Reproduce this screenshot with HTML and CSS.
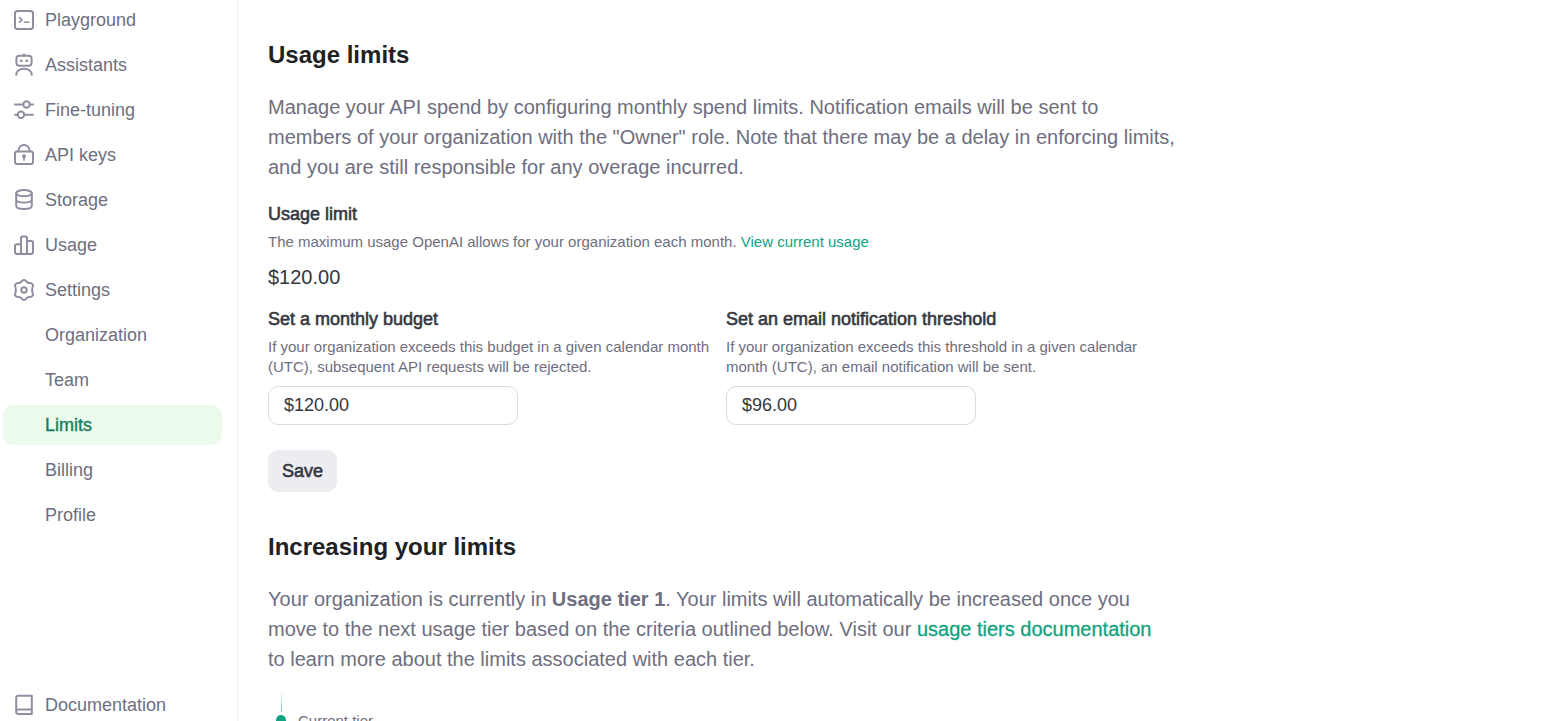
FILE: index.html
```
<!DOCTYPE html>
<html lang="en">
<head>
<meta charset="utf-8">
<title>Usage limits</title>
<link rel="stylesheet" href="styles.css">
</head>
<body>
<div class="shell">
  <nav class="sidebar" aria-label="Main">
    <a class="nav-item" href="#playground">
      <svg class="icon" viewBox="0 0 22 22"><rect x="2" y="2" width="18" height="18" rx="2.5"/><path class="thin" d="M6.500 8.500 9 10.800 6.500 13.200M11.500 13.200h4.200"/></svg>
      Playground</a>
    <a class="nav-item" href="#assistants">
      <svg class="icon" viewBox="0 0 22 22"><rect x="3.400" y="1.800" width="15.200" height="10" rx="3"/><path d="M11 .2v1.600M3.200 20.800c.3-3.800 3.600-6 7.800-6s7.500 2.200 7.800 6"/><path class="dot" d="M8.300 6.800v.1M13.700 6.800v.1"/></svg>
      Assistants</a>
    <a class="nav-item" href="#fine-tuning">
      <svg class="icon" viewBox="0 0 22 22"><path d="M2 5.500h8M17 5.500h3M2 15.800h2.500M11.500 15.800h8.500"/><circle cx="13.500" cy="5.500" r="3.200"/><circle cx="8" cy="15.800" r="3.200"/></svg>
      Fine-tuning</a>
    <a class="nav-item" href="#api-keys">
      <svg class="icon" viewBox="0 0 22 22"><rect x="2" y="7.500" width="18" height="12.500" rx="2"/><path d="M5.500 7.300V6.500a5.500 5.500 0 0 1 11 0v.8"/><path class="thin" d="M11 12.800v3.400"/><circle class="solid" cx="11" cy="12.300" r="2"/></svg>
      API keys</a>
    <a class="nav-item" href="#storage">
      <svg class="icon" viewBox="0 0 22 22"><ellipse cx="11" cy="4.200" rx="7.800" ry="3.100"/><path d="M3.200 4.200v12.600c0 1.900 3.300 3.200 7.800 3.200s7.800-1.300 7.800-3.200V4.200M3.200 10.400c0 1.900 3.300 3 7.800 3s7.800-1.100 7.800-3"/></svg>
      Storage</a>
    <a class="nav-item" href="#usage">
      <svg class="icon" viewBox="0 0 22 22"><path d="M8 20H4a2 2 0 0 1-2-2v-6a1.700 1.700 0 0 1 1.700-1.700H8M8 20V4.200A1.700 1.700 0 0 1 9.700 2.500h2.600A1.700 1.700 0 0 1 14 4.200V20M14 7h4.200A1.800 1.800 0 0 1 20 8.800V18a2 2 0 0 1-2 2H8"/></svg>
      Usage</a>
    <a class="nav-item" href="#settings">
      <svg class="icon" viewBox="0 0 22 22"><path d="M8.800 2.300Q9.600 1 11 1t2.200 1.300q1.200 1.900 3.400 1.700 2.100-.1 3 1.200t0 2.900q-1.100 2.900 0 5.800.9 1.600 0 2.900t-3 1.200q-2.200-.2-3.400 1.700Q12.400 21 11 21t-2.200-1.300Q7.600 17.800 5.400 18q-2.100.1-3-1.200t0-2.900q1.100-2.900 0-5.800-.9-1.600 0-2.900T5.400 4Q7.600 4.200 8.800 2.300Z"/><circle cx="11" cy="11" r="2.700"/></svg>
      Settings</a>
    <a class="nav-item sub" href="#organization">Organization</a>
    <a class="nav-item sub" href="#team">Team</a>
    <a class="nav-item sub active" href="#limits" aria-current="page">Limits</a>
    <a class="nav-item sub" href="#billing">Billing</a>
    <a class="nav-item sub" href="#profile">Profile</a>
    <a class="nav-item last" href="#documentation">
      <svg class="icon" viewBox="0 0 22 22"><path d="M18.800 15.500H5.500A2.200 2.200 0 0 0 3.200 17.700V3.700A2 2 0 0 1 5.200 1.700h13.600V20H5.500a2.300 2.300 0 0 1-2.300-2.300"/></svg>
      Documentation</a>
  </nav>
  <main class="content">
    <section class="section">
      <h1 class="title">Usage limits</h1>
      <p class="lead">Manage your API spend by configuring monthly spend limits. Notification emails will be sent to members of your organization with the "Owner" role. Note that there may be a delay in enforcing limits, and you are still responsible for any overage incurred.</p>
      <h2 class="label">Usage limit</h2>
      <p class="hint">The maximum usage OpenAI allows for your organization each month. <a class="link" href="#usage">View current usage</a></p>
      <p class="amount">$120.00</p>
      <form class="form">
        <div class="field">
          <label class="label" for="budget">Set a monthly budget</label>
          <p class="hint">If your organization exceeds this budget in a given calendar month (UTC), subsequent API requests will be rejected.</p>
          <input class="input" id="budget" type="text" value="$120.00">
        </div>
        <div class="field">
          <label class="label" for="threshold">Set an email notification threshold</label>
          <p class="hint">If your organization exceeds this threshold in a given calendar month (UTC), an email notification will be sent.</p>
          <input class="input" id="threshold" type="text" value="$96.00">
        </div>
        <button class="save" type="button">Save</button>
      </form>
    </section>
    <section class="section">
      <h1 class="title">Increasing your limits</h1>
      <p class="lead">Your organization is currently in <strong>Usage tier 1</strong>. Your limits will automatically be increased once you move to the next usage tier based on the criteria outlined below. Visit our <a class="link" href="#tiers">usage tiers documentation</a> to&nbsp;learn&nbsp;more about the limits associated with each tier.</p>
      <div class="tier">
        <div class="track"><span class="track-line"></span><span class="track-dot"></span></div>
        <span class="tier-name">Current tier</span>
      </div>
    </section>
  </main>
</div>
</body>
</html>
```
FILE: styles.css
```
* { box-sizing: border-box; }
body {
  margin: 0;
  background: #fff;
  color: #353740;
  font-family: "Liberation Sans", Arial, sans-serif;
}
h1, h2, p { margin: 0; }
a { text-decoration: none; }
.shell { display: flex; height: 100vh; overflow: hidden; }
.sidebar {
  flex: 0 0 238px;
  display: flex;
  flex-direction: column;
  gap: 5px;
  padding: 0 15px 0 3px;
  border-right: 1px solid #ececf1;
}
.nav-item {
  display: flex;
  align-items: center;
  flex: 0 0 40px;
  gap: 10px;
  padding-left: 10px;
  border-radius: 10px;
  color: #6e6e80;
  font-size: 18px;
}
.nav-item.sub { padding-left: 42px; }
.nav-item.active { background: #ebfaeb; color: #1a7f64; -webkit-text-stroke: 0.4px; }
.nav-item.last { flex-basis: 32px; margin-top: auto; }
.icon {
  width: 22px;
  height: 22px;
  overflow: visible;
  fill: none;
  stroke: #8e8ea0;
  stroke-width: 2;
  stroke-linecap: round;
  stroke-linejoin: round;
}
.icon .thin { stroke-width: 1.6; }
.icon .dot { stroke-width: 2.6; }
.icon .solid { fill: #8e8ea0; stroke: none; }
.content { flex: 1; padding: 40px 30px 0; }
.section { max-width: 912px; margin-bottom: 40px; }
.title { margin-bottom: 22px; color: #202123; font-size: 24px; line-height: 30px; }
.lead { margin-bottom: 20px; color: #6e6e80; font-size: 20px; line-height: 30px; }
.label {
  display: block;
  margin-bottom: 6px;
  font-size: 18px;
  font-weight: 400;
  line-height: 24px;
  -webkit-text-stroke: 0.6px;
}
.hint { color: #6e6e80; font-size: 15px; line-height: 20px; }
.link { color: #10a37f; }
.lead .link { -webkit-text-stroke: 0.3px; }
.amount { margin: 10px 0 15px; font-size: 20px; line-height: 30px; }
.form { display: grid; grid-template-columns: 1fr 1fr; gap: 25px 16px; max-width: 900px; }
.input {
  display: block;
  width: 250px;
  height: 39px;
  margin-top: 9px;
  padding: 0 15px;
  border: 1px solid #d9d9e3;
  border-radius: 10px;
  background: #fff;
  color: #353740;
  font: inherit;
  font-size: 18px;
}
.save {
  justify-self: start;
  height: 42px;
  padding: 0 14px;
  border: 0;
  border-radius: 10px;
  background: #ececf1;
  color: #353740;
  font: inherit;
  font-size: 18px;
  -webkit-text-stroke: 0.6px;
}
.tier { display: flex; gap: 12px; margin-top: -4px; padding-left: 8px; }
.track { display: flex; flex-direction: column; align-items: center; width: 10px; }
.track-line { width: 1px; height: 22px; background: linear-gradient(#fff, #7cc9b4); }
.track-dot { width: 10px; height: 10px; margin-top: 3px; border-radius: 50%; background: #10a37f; }
.tier-name { padding-top: 21px; color: #6e6e80; font-size: 15px; line-height: 20px; }
```
